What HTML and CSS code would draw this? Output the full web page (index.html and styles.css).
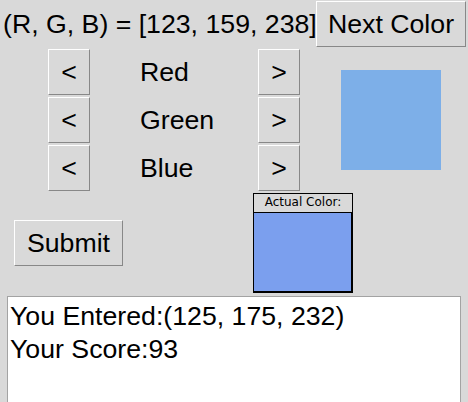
FILE: index.html
```html
<!DOCTYPE html>
<html>
<head>
<meta charset="utf-8">
<link rel="stylesheet" href="styles.css">
</head>
<body>
<div class="app">
  <div class="top">
    <div class="title">(R, G, B) = [123, 159, 238]</div>
    <button class="btn next">Next Color</button>
  </div>
  <div class="mid">
    <button class="btn arrow r1 c1">&lt;</button>
    <div class="label r1">Red</div>
    <button class="btn arrow r1 c2">&gt;</button>
    <button class="btn arrow r2 c1">&lt;</button>
    <div class="label r2">Green</div>
    <button class="btn arrow r2 c2">&gt;</button>
    <button class="btn arrow r3 c1">&lt;</button>
    <div class="label r3">Blue</div>
    <button class="btn arrow r3 c2">&gt;</button>
    <div class="swatch" style="background:#7dafe8"></div>
  </div>
  <div class="bottom">
    <button class="btn submit">Submit</button>
    <div class="actual">
      <div class="actual-label">Actual Color:</div>
      <div class="actual-color" style="background:#7b9fee"></div>
    </div>
  </div>
  <div class="output">
    <div class="line">You Entered:(125, 175, 232)</div>
    <div class="line">Your Score:93</div>
  </div>
</div>
</body>
</html>
```
FILE: styles.css
```css
html, body {
  margin: 0;
  padding: 0;
  background: #d9d9d9;
  overflow: hidden;
}
.app {
  width: 468px;
  height: 402px;
  font-family: "Liberation Sans", Arial, sans-serif;
  font-size: 26.7px;
  color: #000;
}
.btn {
  font-family: "Liberation Sans", Arial, sans-serif;
  font-size: 26.7px;
  color: #000;
  background: #d9d9d9;
  border-style: solid;
  border-width: 1px;
  border-color: #ffffff #888888 #888888 #ffffff;
  padding: 0;
  margin: 0;
  box-sizing: border-box;
  display: flex;
  align-items: center;
  justify-content: center;
}
.top {
  display: flex;
  align-items: center;
  height: 48px;
}
.title {
  width: 313px;
  padding-left: 3px;
  white-space: nowrap;
  line-height: 48px;
}
.next {
  width: 150px;
  height: 46px;
}
.mid {
  display: grid;
  grid-template-columns: 48px 42px 50px 118px 42px 41px 100px;
  grid-template-rows: 46px 46px 46px;
  row-gap: 2px;
  margin-top: 1px;
}
.r1 { grid-row: 1; }
.r2 { grid-row: 2; }
.r3 { grid-row: 3; }
.c1 { grid-column: 2; }
.c2 { grid-column: 5; }
.arrow {
  width: 42px;
  height: 46px;
}
.label {
  grid-column: 4;
  display: flex;
  align-items: center;
  white-space: nowrap;
}
.swatch {
  grid-column: 7;
  grid-row: 1 / 4;
  align-self: center;
  width: 100px;
  height: 100px;
}
.bottom {
  display: flex;
  align-items: center;
  margin-top: 2px;
  height: 102px;
}
.submit {
  margin-left: 14px;
  width: 109px;
  height: 46px;
  margin-top: -2px;
}
.actual {
  margin-left: 130px;
  width: 100px;
  align-self: flex-start;
}
.actual-label {
  box-sizing: border-box;
  height: 20px;
  border: 1px solid #000;
  font-family: "DejaVu Sans", sans-serif;
  font-size: 12px;
  line-height: 17px;
  text-align: center;
  white-space: nowrap;
}
.actual-color {
  box-sizing: border-box;
  height: 80px;
  border-style: solid;
  border-color: #000;
  border-width: 0 2px 2px 1px;
}
.output {
  margin-left: 7px;
  margin-top: 1px;
  width: 454px;
  height: 120px;
  box-sizing: border-box;
  background: #fff;
  border: 1px solid #a3a3a3;
  padding: 3px 0 0 2px;
}
.line {
  line-height: 33px;
  white-space: nowrap;
}
```
